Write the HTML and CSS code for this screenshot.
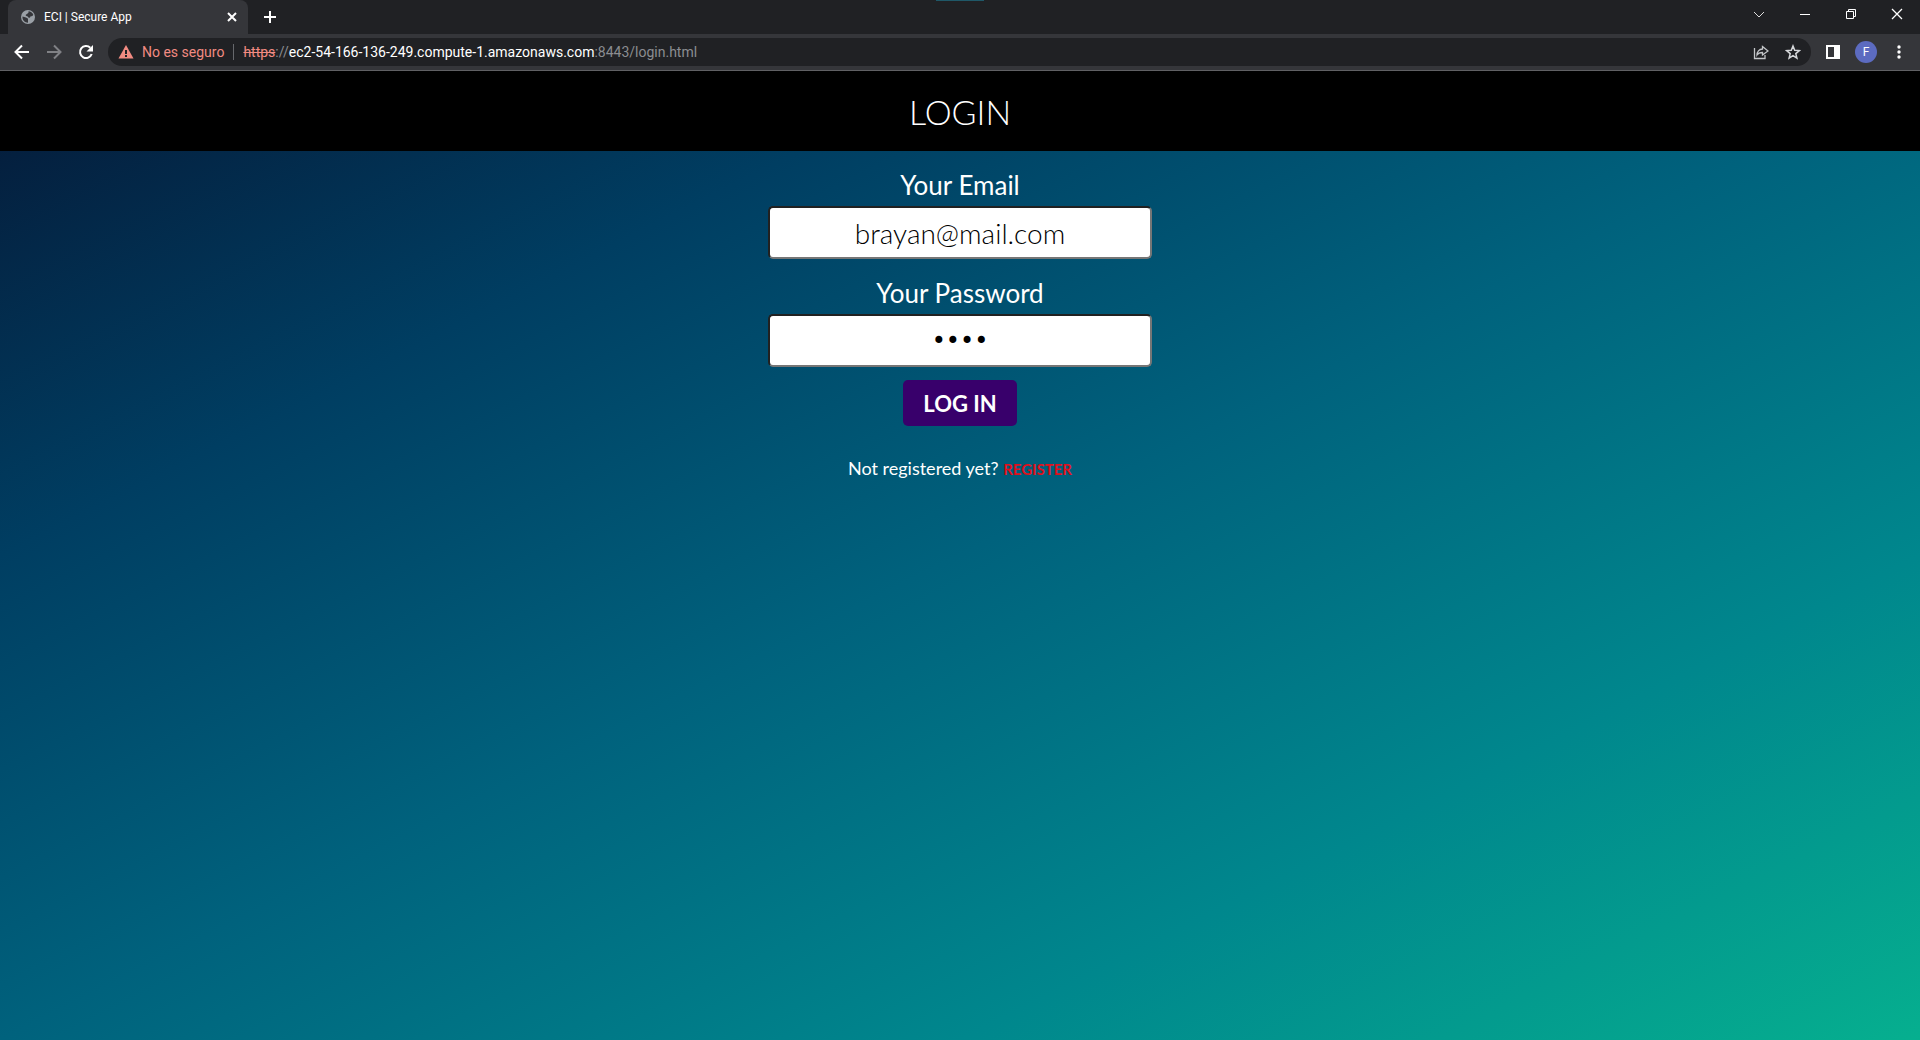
FILE: index.html
```html
<!DOCTYPE html>
<html lang="en">
<head>
<meta charset="utf-8">
<title>ECI | Secure App</title>
<link rel="stylesheet" href="styles.css">
</head>
<body>
<div class="browser">
  <div class="tabstrip">
    <div class="tab">
      <svg class="globe" width="16" height="16" viewBox="0 0 16 16" aria-hidden="true"><circle cx="8" cy="8" r="7" fill="#9aa0a6"/><path d="M2.500 7.500l3.500 1c1.500.5 2 1 2 2v3.200C5 13.700 2 11 2.500 7.500zM8.500 2.300c2 0 4 1.500 4.800 3.500-.8 1.700-2 1.400-2.800 1.400 0 1.300-1 1.800-2 1.300-1-.5-.5-1.500-2-1.500-1 0-1-1.500 0-1.700 1.300 0 .8-1.300 2-1.500z" fill="#35363a"/></svg>
      <span class="tab-title">ECI | Secure App</span>
      <button class="icon-btn tab-close" type="button" aria-label="Close tab"><svg width="16" height="16" viewBox="0 0 16 16"><path d="M4 4l8 8M12 4l-8 8" stroke="#fff" stroke-width="2"/></svg></button>
    </div>
    <button class="icon-btn new-tab" type="button" aria-label="New tab"><svg width="16" height="16" viewBox="0 0 16 16"><path d="M8 2v12M2 8h12" stroke="#fff" stroke-width="2"/></svg></button>
    <div class="window-buttons">
      <button class="icon-btn" type="button" aria-label="Search tabs"><svg width="16" height="16" viewBox="0 0 16 16"><path d="M3 6l5 5 5-5" fill="none" stroke="#ddd"/></svg></button>
      <button class="icon-btn" type="button" aria-label="Minimize"><svg width="16" height="16" viewBox="0 0 16 16"><path d="M3 8.500h10" stroke="#fff"/></svg></button>
      <button class="icon-btn" type="button" aria-label="Restore"><svg width="16" height="16" viewBox="0 0 16 16"><path d="M3.500 5.500h7v7h-7zM5.500 5.500v-2h7v7h-2" fill="none" stroke="#fff"/></svg></button>
      <button class="icon-btn" type="button" aria-label="Close"><svg width="16" height="16" viewBox="0 0 16 16"><path d="M3 3l10 10M13 3L3 13" stroke="#fff" stroke-width="1.300"/></svg></button>
    </div>
    <div class="grip"></div>
  </div>
  <div class="toolbar">
    <button class="icon-btn" type="button" aria-label="Back"><svg width="16" height="16" viewBox="0 0 16 16"><path d="M15 8H2M8 1.500L1.500 8 8 14.500" fill="none" stroke="#fff" stroke-width="2"/></svg></button>
    <button class="icon-btn" type="button" aria-label="Forward"><svg width="16" height="16" viewBox="0 0 16 16"><path d="M1 8h13M8 1.500L14.500 8 8 14.500" fill="none" stroke="#808185" stroke-width="2"/></svg></button>
    <button class="icon-btn" type="button" aria-label="Reload"><svg width="16" height="16" viewBox="0 0 16 16"><path d="M13.700 10A6 6 0 1 1 12.300 3.800" fill="none" stroke="#fff" stroke-width="2"/><path d="M15 1v6.500H8.500z" fill="#fff"/></svg></button>
    <div class="address">
      <svg width="16" height="14" viewBox="0 0 16 14" aria-hidden="true"><path d="M8 0l7.500 13.500H.5z" fill="#f28b82"/><path d="M8 5v4M8 10v2" stroke="#202124" stroke-width="2"/></svg>
      <span class="warning">No es seguro</span>
      <span class="divider"></span>
      <span class="url"><s>https</s>://<b>ec2-54-166-136-249.compute-1.amazonaws.com</b>:8443/login.html</span>
      <button class="icon-btn share" type="button" aria-label="Share"><svg width="16" height="16" viewBox="0 0 16 16"><path d="M1.500 4v10.500H12V11M9.500 2.500L15 7l-5.500 4V8.500C7 8.500 5 9.500 4 11c0-3 2-6 5.500-6z" fill="none" stroke="#c3c5c8" stroke-width="1.300"/></svg></button>
      <button class="icon-btn" type="button" aria-label="Bookmark"><svg width="16" height="16" viewBox="0 0 16 16"><path d="M8 2l1.700 4.300 4.600.3-3.500 3 1.100 4.500L8 11.600l-3.900 2.500 1.100-4.500-3.500-3 4.600-.3z" fill="none" stroke="#d5d7da" stroke-width="1.500"/></svg></button>
    </div>
    <button class="icon-btn panel" type="button" aria-label="Side panel"><svg width="16" height="16" viewBox="0 0 16 16"><path d="M1 1h14v14H1zM3 3v10h6V3z" fill="#fff" fill-rule="evenodd"/></svg></button>
    <button class="avatar" type="button">F</button>
    <button class="icon-btn" type="button" aria-label="Menu"><svg width="16" height="16" viewBox="0 0 16 16"><g fill="#fff"><circle cx="8" cy="3" r="1.700"/><circle cx="8" cy="8" r="1.700"/><circle cx="8" cy="13" r="1.700"/></g></svg></button>
  </div>
</div>
<main class="page">
  <header class="page-header"><h1>LOGIN</h1></header>
  <form class="login">
    <label for="email">Your Email</label>
    <input id="email" type="email" value="brayan@mail.com">
    <label for="password">Your Password</label>
    <input id="password" type="password" value="1234">
    <button class="submit" type="button">LOG IN</button>
    <p class="hint">Not registered yet? <a href="#register">REGISTER</a></p>
  </form>
</main>
</body>
</html>
```

FILE: styles.css
```css
* { box-sizing: border-box; }
body {
  margin: 0;
  min-height: 100vh;
  display: flex;
  flex-direction: column;
  font-family: "Century Gothic", "URW Gothic", Lato, sans-serif;
}
svg { display: block; }
button { cursor: pointer; }
.icon-btn { padding: 0; border: 0; background: none; flex: none; }

.browser {
  font-family: "Segoe UI", Roboto, sans-serif;
  background: #35363a;
  border-bottom: 1px solid #606164;
}
.tabstrip {
  position: relative;
  display: flex;
  align-items: center;
  height: 34px;
  background: #202124;
}
.tab {
  display: flex;
  align-items: center;
  align-self: stretch;
  width: 240px;
  margin-left: 8px;
  padding: 0 8px 0 12px;
  gap: 8px;
  border-radius: 8px 8px 0 0;
  background: #35363a;
  color: #fff;
  font-size: 12px;
}
.tab-title { flex: 1; }
.new-tab { margin-left: 14px; }
.window-buttons {
  display: flex;
  gap: 30px;
  margin-left: auto;
  padding: 0 15px 6px 0;
}
.grip {
  position: absolute;
  top: 0;
  left: 50%;
  width: 48px;
  height: 1px;
  margin-left: -24px;
  background: #1f5868;
}
.toolbar {
  display: flex;
  align-items: center;
  height: 36px;
  padding: 0 13px 0 14px;
  gap: 16px;
}
.address {
  flex: 1;
  display: flex;
  align-items: center;
  height: 28px;
  padding: 0 10px;
  margin-left: -2px;
  border-radius: 14px;
  background: #202124;
  color: #8b8d91;
  font-size: 14px;
}
.warning { color: #f28b82; margin-left: 8px; }
.divider { width: 1px; height: 16px; margin: 0 9px; background: #66686c; }
.url s { color: #f28b82; }
.url b { color: #fff; font-weight: 400; }
.share { margin: 0 16px 0 auto; }
.panel { margin-left: -2px; }
.avatar {
  width: 22px;
  height: 22px;
  padding: 0;
  border: 0;
  border-radius: 50%;
  background: #5c6bc0;
  color: #fff;
  font: 12px Roboto, sans-serif;
  margin: 0 -2px;
}

.page {
  flex: 1;
  background: linear-gradient(to bottom right, #051937, #003e62, #00627d, #00878d, #06af8f);
}
.page-header {
  display: flex;
  align-items: center;
  justify-content: center;
  height: 80px;
  background: #000;
  color: #fff;
}
h1 { margin: 0; font-size: 34px; font-weight: 300; }
.login {
  display: flex;
  flex-direction: column;
  align-items: center;
  padding-top: 19px;
  color: #fff;
}
label { font-size: 26px; line-height: 30px; }
input {
  width: 20%;
  min-width: 240px;
  height: 53px;
  margin: 6px 0 19px;
  padding: 0 10px;
  border: 2px inset #767676;
  border-radius: 5px;
  background: #fff;
  color: #000;
  font: 300 28px "Century Gothic", "URW Gothic", Lato, sans-serif;
  text-align: center;
}
#password { margin-bottom: 13px; font: 24px "DejaVu Sans", sans-serif; }
.submit {
  width: 114px;
  height: 46px;
  padding: 0;
  border: 0;
  border-radius: 5px;
  background: #38006b;
  color: #fff;
  font: bold 22px "Century Gothic", "URW Gothic", Lato, sans-serif;
}
.hint { margin: 32px 0 0; font-size: 18px; line-height: 20px; }
.hint a { color: #e0101c; font-size: 15px; font-weight: 700; text-decoration: none; }
```
